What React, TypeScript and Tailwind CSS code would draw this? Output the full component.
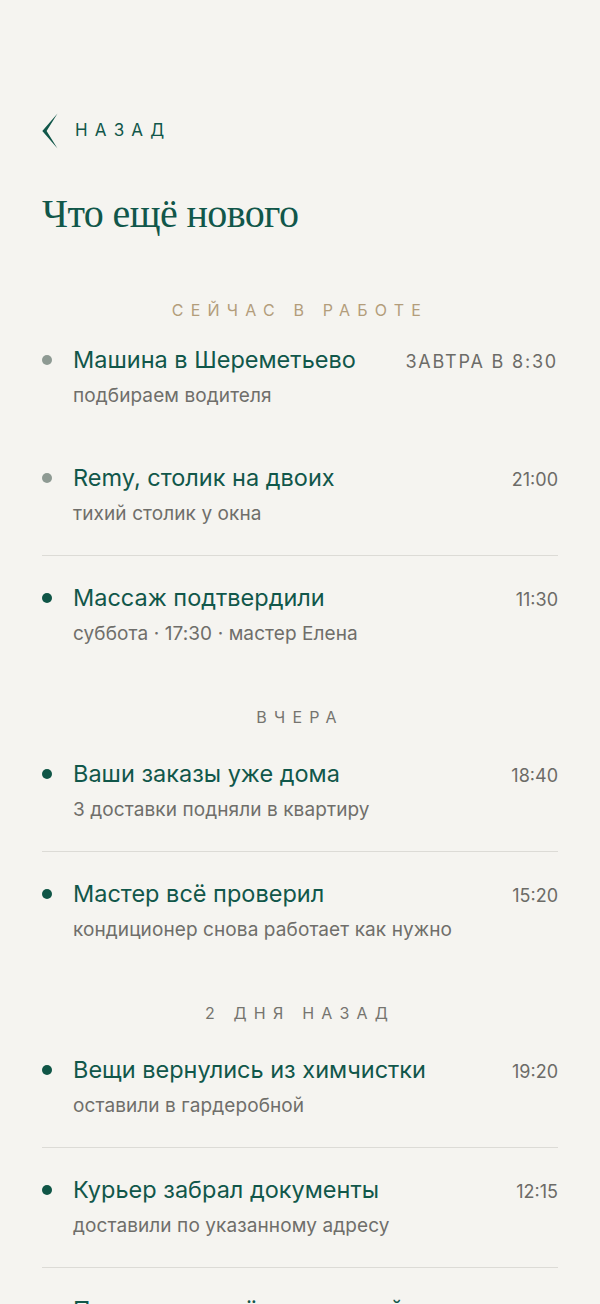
import type { ReactNode } from "react";

type Item = {
  title: string;
  note: string;
  time: string;
  active?: boolean;
  divider?: boolean;
};

type Section = {
  label: string;
  gold?: boolean;
  items: Item[];
};

const sections: Section[] = [
  {
    label: "Сейчас в работе",
    gold: true,
    items: [
      { title: "Машина в Шереметьево", note: "подбираем водителя", time: "Завтра в 8:30", active: true },
      { title: "Remy, столик на двоих", note: "тихий столик у окна", time: "21:00", active: true, divider: true },
      { title: "Массаж подтвердили", note: "суббота · 17:30 · мастер Елена", time: "11:30" },
    ],
  },
  {
    label: "Вчера",
    items: [
      { title: "Ваши заказы уже дома", note: "3 доставки подняли в квартиру", time: "18:40", divider: true },
      { title: "Мастер всё проверил", note: "кондиционер снова работает как нужно", time: "15:20" },
    ],
  },
  {
    label: "2 дня назад",
    items: [
      { title: "Вещи вернулись из химчистки", note: "оставили в гардеробной", time: "19:20", divider: true },
      { title: "Курьер забрал документы", note: "доставили по указанному адресу", time: "12:15", divider: true },
      { title: "Почистили ковёр в гостиной", note: "можно снова ходить босиком", time: "10:10" },
    ],
  },
];

function Row({ title, note, time, active, divider }: Item) {
  const word = /[a-zа-яё]/i.test(time);
  return (
    <li className={divider ? "border-b border-[#dcdbd6] pt-7 pb-[29px]" : "py-7"}>
      <div className="flex h-7 items-center">
        <span
          className={
            active
              ? "h-2.5 w-2.5 shrink-0 rounded-full bg-[#8e9a93]"
              : "h-2.5 w-2.5 shrink-0 rounded-full bg-[#0f5546]"
          }
        />
        <div className="ml-[21px] flex h-7 flex-1 items-baseline justify-between">
          <span className="text-[23.5px] leading-[28px] text-[#11574a]">{title}</span>
          <span
            className={
              word
                ? "text-[18px] uppercase leading-[28px] tracking-[0.1em] text-[#6c6b67]"
                : "text-[18px] leading-[28px] text-[#6c6b67]"
            }
          >
            {time}
          </span>
        </div>
      </div>
      <p className="ml-[31px] mt-2.5 text-[19px] leading-6 tracking-[0.005em] text-[#6f6e6a]">{note}</p>
    </li>
  );
}

function SectionLabel({ children, gold }: { children: ReactNode; gold?: boolean }) {
  return (
    <h2
      className={
        gold
          ? "-mb-0.5 text-center text-[16px] uppercase leading-5 tracking-[0.45em] text-[#b39d7b]"
          : "mb-[5px] mt-[33px] text-center text-[16px] uppercase leading-5 tracking-[0.45em] text-[#75746f]"
      }
    >
      {children}
    </h2>
  );
}

export default function App() {
  return (
    <div
      className="min-h-[1304px] overflow-hidden bg-[#f5f4f0] px-[42px] pt-[113px]"
      style={{ fontFamily: "Inter, 'Noto Sans', sans-serif" }}
    >
      <button className="flex h-9 items-center gap-[17px] text-[#11574a]">
        <svg width="16" height="36" viewBox="0 0 16 36" fill="currentColor">
          <path d="M15.5 0.5 L0.3 18 L15.5 35.5 L4.6 18 Z" />
        </svg>
        <span className="text-[17px] uppercase tracking-[0.42em]">Назад</span>
      </button>

      <h1
        className="mt-[41px] text-[40px] leading-[48px] tracking-[-0.015em] text-[#11574a]"
        style={{ fontFamily: "'Liberation Serif', 'DejaVu Serif', serif" }}
      >
        Что ещё нового
      </h1>

      <div className="mt-[62px]">
        {sections.map((s) => (
          <section key={s.label}>
            <SectionLabel gold={s.gold}>{s.label}</SectionLabel>
            <ul>
              {s.items.map((it) => (
                <Row key={it.title} {...it} />
              ))}
            </ul>
          </section>
        ))}
      </div>
    </div>
  );
}
